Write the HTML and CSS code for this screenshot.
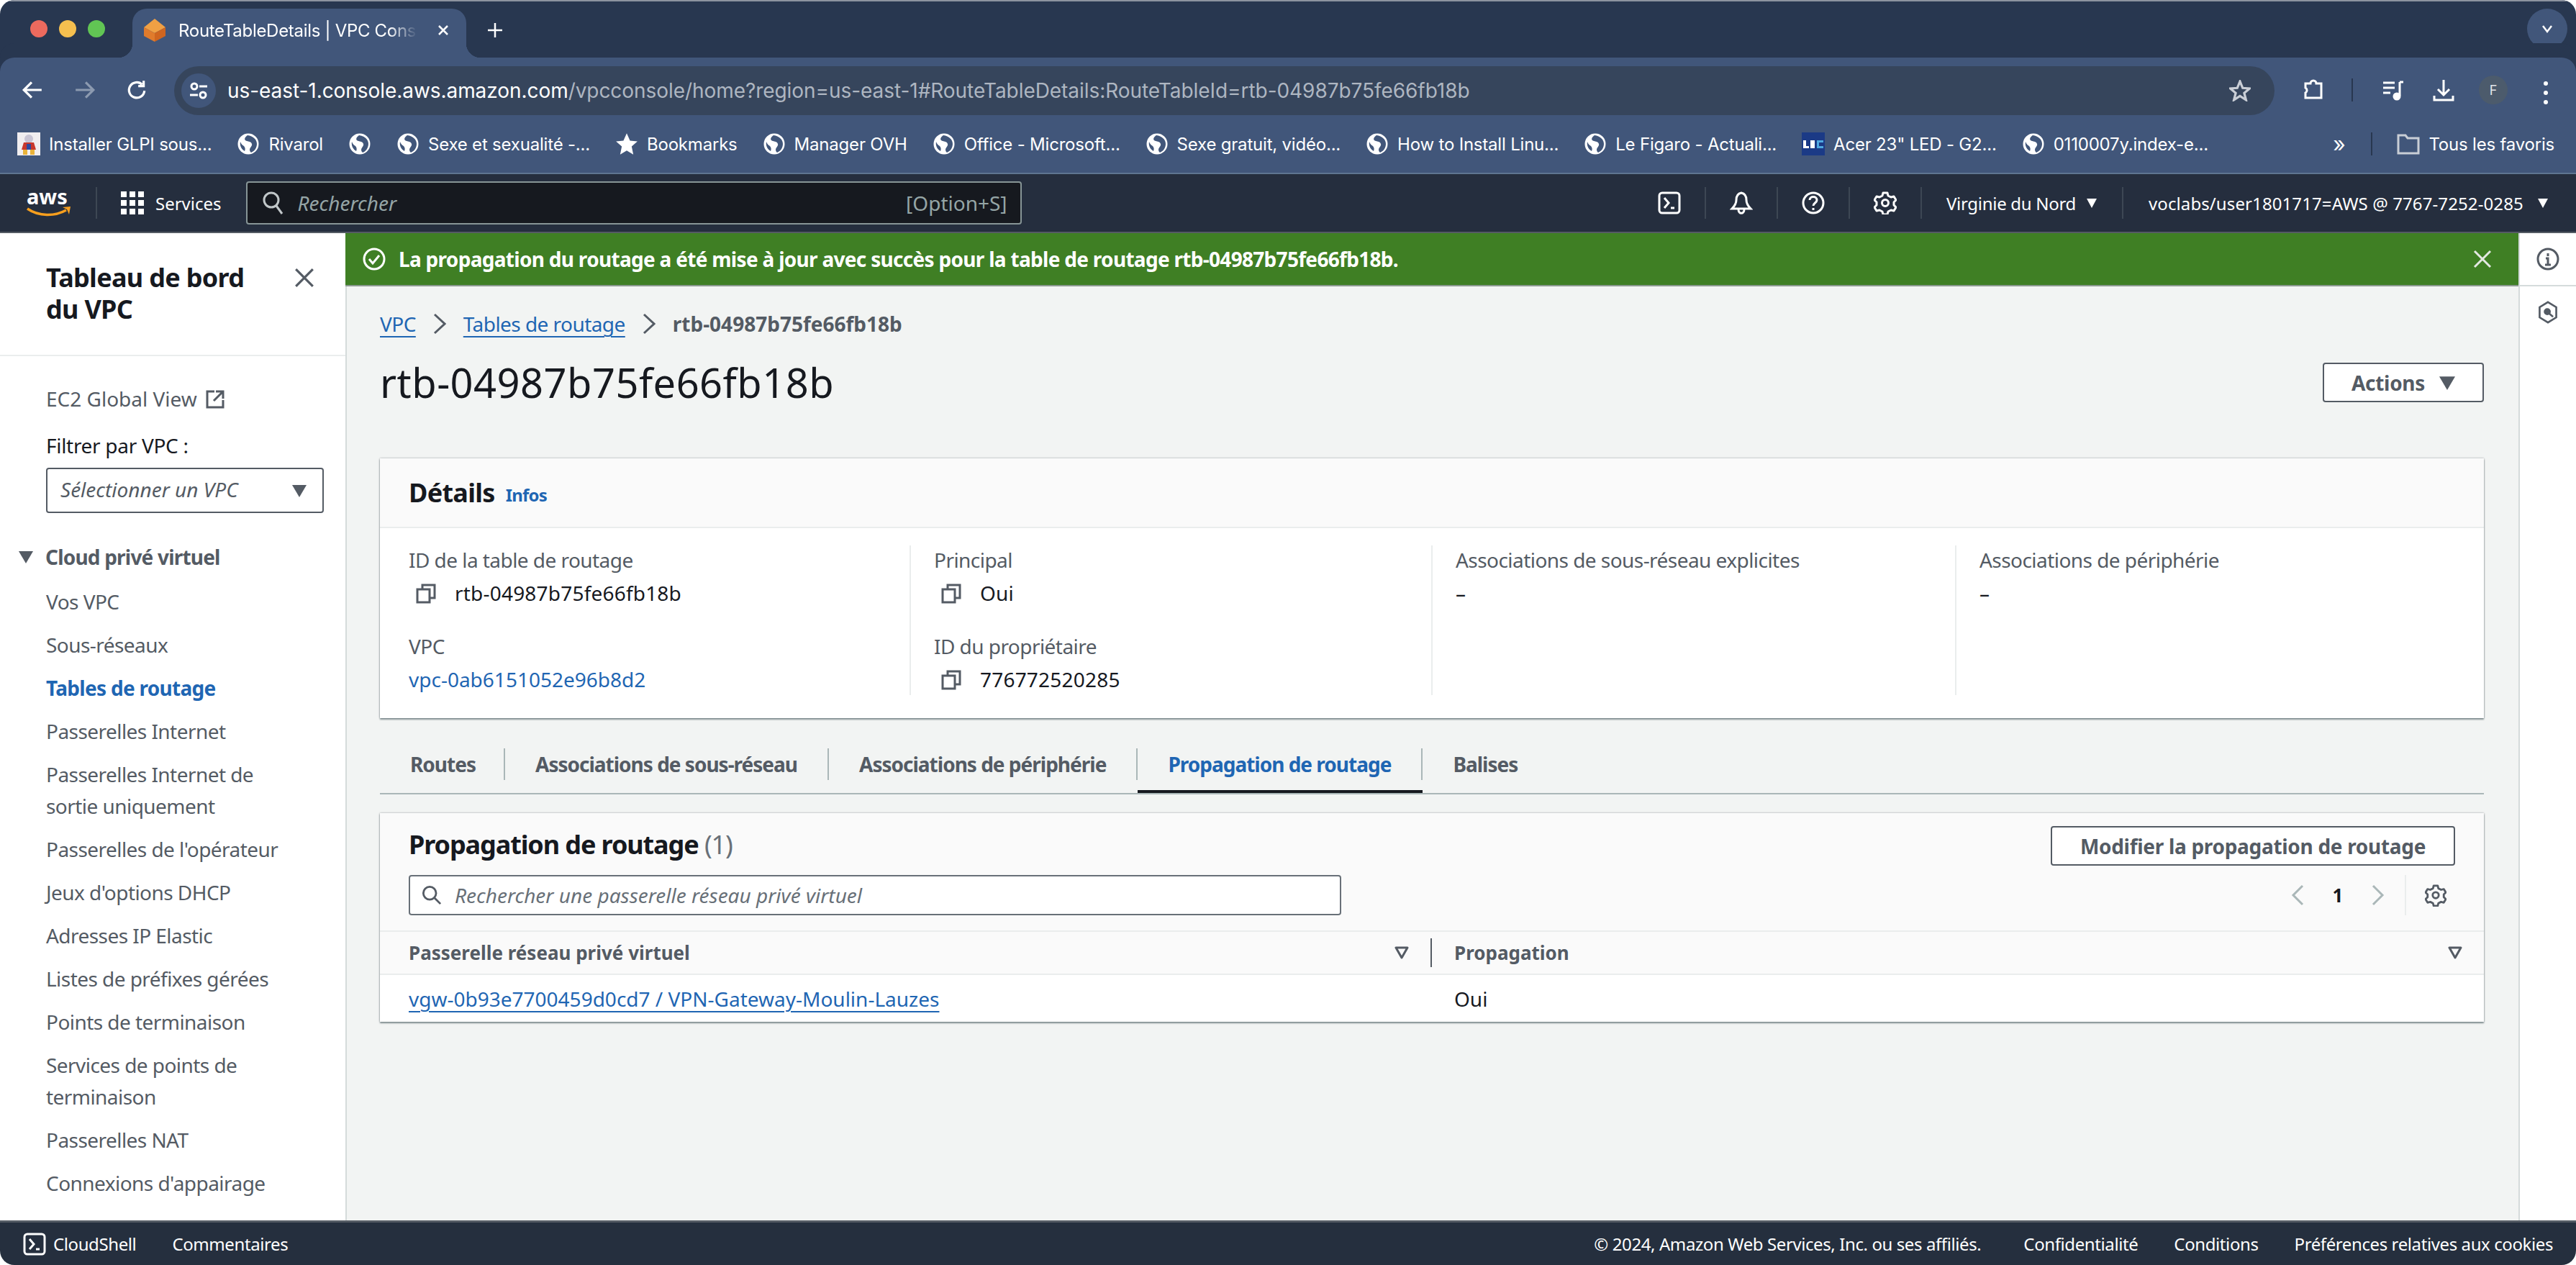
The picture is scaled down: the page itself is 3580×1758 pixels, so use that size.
FILE: index.html
```html
<!DOCTYPE html>
<html lang="fr">

<head>
  <meta charset="UTF-8">
  <title>RouteTableDetails | VPC Console</title>
  <link rel="stylesheet" href="styles.css">
</head>

<body>

  <!-- Shared icons -->
  <svg class="defs" width="0" height="0">
    <symbol id="globe" viewBox="0 0 32 32">
      <circle cx="16" cy="16" r="14.5" fill="#fff"/>
      <path fill="#41567a" d="M15 4c-3 2-5 5-3 7 3 2 8 1 9 5 1 3-3 5-3 8 0 2 1 3 2 4 5-2 8-7 8-12 0-6-5-11-13-12zM5 13c-1 5 1 10 6 13 1-2 1-5-1-7-2-1-4-3-5-6z"/>
    </symbol>
    <symbol id="copy" viewBox="0 0 28 28">
      <path fill="none" stroke="#545b64" stroke-width="3" d="M9 7V2h17v18h-6M2 8h17v18H2z"/>
    </symbol>
    <symbol id="caret" viewBox="0 0 20 20">
      <path fill="#545b64" d="M0 2h20L10 19z"/>
    </symbol>
    <symbol id="caret-w" viewBox="0 0 20 20">
      <path fill="#fff" d="M3 4h14l-7 13z"/>
    </symbol>
    <symbol id="sort" viewBox="0 0 20 20">
      <path fill="none" stroke="#545b64" stroke-width="3" stroke-linejoin="round" d="M2 3h16l-8 14z"/>
    </symbol>
    <symbol id="gear" viewBox="0 0 32 32">
      <path fill="none" stroke="currentColor" stroke-width="3" stroke-linejoin="round" d="M13 2h6l1 4 4 2 4-1 3 5-3 3v4l3 3-3 5-4-1-4 2-1 4h-6l-1-4-4-2-4 1-3-5 3-3v-4l-3-3 3-5 4 1 4-2z"/>
      <circle cx="16" cy="16" r="4.5" fill="none" stroke="currentColor" stroke-width="3"/>
    </symbol>
    <symbol id="shell" viewBox="0 0 32 32">
      <rect x="2" y="2" width="28" height="28" rx="4" fill="none" stroke="#fff" stroke-width="3"/>
      <path fill="none" stroke="#fff" stroke-width="3" d="M9 9l6 7-6 7M18 23h5"/>
    </symbol>
  </svg>

  <div class="window">

    <!-- Browser tabs -->
    <div class="tabstrip">
      <div class="lights">
        <span class="light red"></span>
        <span class="light yellow"></span>
        <span class="light green"></span>
      </div>
      <div class="tab-browser">
        <svg class="favicon" viewBox="0 0 30 32">
          <path fill="#f0a044" d="M15 0l15 12-15 8L0 12z"/>
          <path fill="#e07b2c" d="M0 12l15 8v12L0 24z"/>
          <path fill="#d0651f" d="M30 12l-15 8v12l15-8z"/>
        </svg>
        <span class="tab-title">RouteTableDetails | VPC Cons</span>
        <svg class="tab-close" viewBox="0 0 16 16"><path d="M2 2l12 12M14 2L2 14"/></svg>
      </div>
      <svg class="tab-new" viewBox="0 0 20 20"><path d="M10 0v20M0 10h20"/></svg>
      <div class="tab-menu">
        <svg viewBox="0 0 16 16"><path d="M2 4l6 8 6-8"/></svg>
      </div>
    </div>

    <!-- Browser toolbar -->
    <div class="toolbar">
      <svg class="tool arrow" viewBox="0 0 28 28"><path d="M26 14H4M13 4L3 14l10 10"/></svg>
      <svg class="tool arrow off" viewBox="0 0 28 28"><path d="M2 14h22M15 4l10 10-10 10"/></svg>
      <svg class="tool arrow" viewBox="0 0 28 28"><path d="M24 15a10 10 0 1 1-3-8M23 2v7h-7"/></svg>
      <div class="address">
        <span class="site-btn">
          <svg viewBox="0 0 28 28"><circle cx="8" cy="8" r="4"/><path d="M15 8h11M2 20h11"/><circle cx="20" cy="20" r="4"/></svg>
        </span>
        <span class="url"><b>us-east-1.console.aws.amazon.com</b>/vpcconsole/home?region=us-east-1#RouteTableDetails:RouteTableId=rtb-04987b75fe66fb18b</span>
        <svg class="url-star" viewBox="0 0 28 28"><path d="M14 2l3.5 8.500 9 .7-7 5.800 2.300 9L14 21l-7.800 5 2.300-9-7-5.800 9-.7z"/></svg>
      </div>
      <svg class="tool ext" viewBox="0 0 32 32"><path d="M5 7h7a4 4 0 0 1 8 0h7v20H5v-7a4 4 0 0 0 0-7z"/></svg>
      <span class="tool-sep"></span>
      <svg class="tool media" viewBox="0 0 32 32"><path d="M3 6h16M3 13h16M3 20h10"/><path d="M26 5v19"/><circle cx="22" cy="25" r="4" class="solid"/><path d="M26 5h5"/></svg>
      <svg class="tool down" viewBox="0 0 32 32"><path d="M16 2v21M8 15l8 8 8-8M3 24v6h26v-6"/></svg>
      <span class="avatar">F</span>
      <span class="dots"><i></i><i></i><i></i></span>
    </div>

    <!-- Bookmarks -->
    <div class="bookmarks">
      <span class="bm">
        <svg class="bm-icon" viewBox="0 0 32 32">
          <rect width="32" height="32" fill="#f1eef0"/><circle cx="16" cy="9" r="6" fill="#c9c5d4"/>
          <path fill="#c8372d" d="M9 14h14l3 10H6z"/><path fill="#e8b23a" d="M8 24h6v7H8zM18 24h6v7h-6z"/><path fill="#2c4aa0" d="M13 16h6v8h-6z"/>
        </svg>Installer GLPI sous...</span>
      <span class="bm"><svg class="bm-icon"><use href="#globe"/></svg>Rivarol</span>
      <span class="bm"><svg class="bm-icon"><use href="#globe"/></svg></span>
      <span class="bm"><svg class="bm-icon"><use href="#globe"/></svg>Sexe et sexualité -...</span>
      <span class="bm">
        <svg class="bm-icon" viewBox="0 0 28 28"><path fill="#fff" d="M14 1l4 9 9 1-7 6 2 10-8-5-8 5 2-10-7-6 9-1z"/></svg>Bookmarks</span>
      <span class="bm"><svg class="bm-icon"><use href="#globe"/></svg>Manager OVH</span>
      <span class="bm"><svg class="bm-icon"><use href="#globe"/></svg>Office - Microsoft...</span>
      <span class="bm"><svg class="bm-icon"><use href="#globe"/></svg>Sexe gratuit, vidéo...</span>
      <span class="bm"><svg class="bm-icon"><use href="#globe"/></svg>How to Install Linu...</span>
      <span class="bm"><svg class="bm-icon"><use href="#globe"/></svg>Le Figaro - Actuali...</span>
      <span class="bm">
        <svg class="bm-icon" viewBox="0 0 32 32">
          <rect width="32" height="32" fill="#1b3a86"/><path fill="#fff" d="M2 11h4v8h4v3H2z"/><path fill="#fff" d="M12 11h6v11h-6z"/><path fill="#4fa8e0" d="M21 11h9v3h-6v5h6v3h-9z"/>
        </svg>Acer 23" LED - G2...</span>
      <span class="bm"><svg class="bm-icon"><use href="#globe"/></svg>0110007y.index-e...</span>
      <span class="bm-more">»</span>
      <span class="bm-sep"></span>
      <span class="bm bm-all">
        <svg class="bm-icon" viewBox="0 0 32 32"><path fill="none" stroke="#c9ced6" stroke-width="3" d="M2 4h10l3 4h15v21H2z"/></svg>Tous les favoris</span>
    </div>

    <!-- AWS top navigation -->
    <header class="aws-nav">
      <svg class="aws-logo" viewBox="0 0 64 44">
        <text x="1" y="24" class="aws-word">aws</text>
        <path fill="none" stroke="#f79f1e" stroke-width="3.500" d="M2 30c16 11 38 11 54 2"/>
        <path fill="#f79f1e" d="M51 28l11-1-2 11-3-7z"/>
      </svg>
      <span class="nav-rule"></span>
      <svg class="grid-icon" viewBox="0 0 32 32">
        <path fill="#fff" d="M0 0h8v8H0zM12 0h8v8h-8zM24 0h8v8h-8zM0 12h8v8H0zM12 12h8v8h-8zM24 12h8v8h-8zM0 24h8v8H0zM12 24h8v8h-8zM24 24h8v8h-8z"/>
      </svg>
      <span class="services">Services</span>
      <div class="nav-search">
        <svg viewBox="0 0 30 34"><circle cx="13" cy="13" r="10"/><path d="M20 21l8 11"/></svg>
        <em>Rechercher</em>
        <span>[Option+S]</span>
      </div>
      <div class="nav-right">
        <span class="nav-cell"><svg class="nav-icon"><use href="#shell"/></svg></span>
        <span class="nav-cell"><svg class="nav-icon" viewBox="0 0 32 32"><path d="M16 2c5 1 7 5 7 10 0 5 2 8 6 12H3c4-4 6-7 6-12 0-5 2-9 7-10zM12 25c0 7 8 7 8 0"/></svg></span>
        <span class="nav-cell"><svg class="nav-icon" viewBox="0 0 32 32"><circle cx="16" cy="16" r="14"/><path d="M11 12c0-6 10-6 10 0 0 4-5 4-5 8"/><path d="M16 23v3"/></svg></span>
        <span class="nav-cell nav-gear"><svg class="nav-icon"><use href="#gear"/></svg></span>
        <span class="nav-cell nav-text region">Virginie du Nord <svg class="nav-caret"><use href="#caret-w"/></svg></span>
        <span class="nav-text account">voclabs/user1801717=AWS @ 7767-7252-0285 <svg class="nav-caret"><use href="#caret-w"/></svg></span>
      </div>
    </header>

    <div class="console">

      <!-- Side navigation -->
      <aside class="sidebar">
        <div class="side-head">
          <h2>Tableau de bord du VPC</h2>
          <svg class="side-close" viewBox="0 0 28 28"><path d="M3 3l22 22M25 3L3 25"/></svg>
        </div>
        <div class="side-body">
          <a class="side-ec2">EC2 Global View
            <svg viewBox="0 0 28 28"><path d="M12 4H2v22h22V16"/><path d="M14 4h10v10M24 4L11 17"/></svg>
          </a>
          <label class="side-filter">Filtrer par VPC :</label>
          <div class="side-select">
            <em>Sélectionner un VPC</em>
            <svg><use href="#caret"/></svg>
          </div>
          <div class="side-group">
            <svg><use href="#caret"/></svg>Cloud privé virtuel
          </div>
          <ul class="side-links">
            <li>Vos VPC</li>
            <li>Sous-réseaux</li>
            <li class="current">Tables de routage</li>
            <li>Passerelles Internet</li>
            <li>Passerelles Internet de sortie uniquement</li>
            <li>Passerelles de l'opérateur</li>
            <li>Jeux d'options DHCP</li>
            <li>Adresses IP Elastic</li>
            <li>Listes de préfixes gérées</li>
            <li>Points de terminaison</li>
            <li>Services de points de terminaison</li>
            <li>Passerelles NAT</li>
            <li>Connexions d'appairage</li>
          </ul>
        </div>
      </aside>

      <!-- Main content -->
      <main class="main">
        <div class="flash">
          <svg class="flash-check" viewBox="0 0 32 32"><circle cx="16" cy="16" r="14"/><path d="M9 16l5 6 9-11"/></svg>
          <span class="flash-text">La propagation du routage a été mise à jour avec succès pour la table de routage rtb-04987b75fe66fb18b.</span>
          <svg class="flash-close" viewBox="0 0 28 28"><path d="M3 3l22 22M25 3L3 25"/></svg>
        </div>

        <div class="page">
          <nav class="crumbs">
            <a>VPC</a>
            <svg viewBox="0 0 18 30"><path d="M2 2l14 13L2 28"/></svg>
            <a>Tables de routage</a>
            <svg viewBox="0 0 18 30"><path d="M2 2l14 13L2 28"/></svg>
            <span>rtb-04987b75fe66fb18b</span>
          </nav>

          <div class="page-head">
            <h1>rtb-04987b75fe66fb18b</h1>
            <button class="btn btn-actions">Actions <svg><use href="#caret"/></svg></button>
          </div>

          <section class="card">
            <div class="card-head">
              <h2>Détails</h2>
              <a class="info">Infos</a>
            </div>
            <div class="details">
              <div class="col">
                <div class="kv">
                  <label>ID de la table de routage</label>
                  <p class="copy"><svg><use href="#copy"/></svg>rtb-04987b75fe66fb18b</p>
                </div>
                <div class="kv">
                  <label>VPC</label>
                  <p><a>vpc-0ab6151052e96b8d2</a></p>
                </div>
              </div>
              <div class="col">
                <div class="kv">
                  <label>Principal</label>
                  <p class="copy"><svg><use href="#copy"/></svg>Oui</p>
                </div>
                <div class="kv">
                  <label>ID du propriétaire</label>
                  <p class="copy"><svg><use href="#copy"/></svg>776772520285</p>
                </div>
              </div>
              <div class="col">
                <div class="kv">
                  <label>Associations de sous-réseau explicites</label>
                  <p>–</p>
                </div>
              </div>
              <div class="col">
                <div class="kv">
                  <label>Associations de périphérie</label>
                  <p>–</p>
                </div>
              </div>
            </div>
          </section>

          <div class="tabs">
            <a class="tab first"><span>Routes</span></a>
            <a class="tab"><span>Associations de sous-réseau</span></a>
            <a class="tab"><span>Associations de périphérie</span></a>
            <a class="tab active"><span>Propagation de routage</span></a>
            <a class="tab last"><span>Balises</span></a>
          </div>

          <section class="card card-table">
            <div class="table-head">
              <div class="table-left">
                <h2>Propagation de routage <small>(1)</small></h2>
                <div class="table-search">
                  <svg viewBox="0 0 30 30"><circle cx="12" cy="12" r="9.500"/><path d="M19 19l9 9"/></svg>
                  <em>Rechercher une passerelle réseau privé virtuel</em>
                </div>
              </div>
              <div class="table-right">
                <button class="btn btn-modify">Modifier la propagation de routage</button>
                <div class="pager">
                  <svg viewBox="0 0 18 30"><path d="M16 2L3 15l13 13"/></svg>
                  <b>1</b>
                  <svg viewBox="0 0 18 30"><path d="M2 2l13 13L2 28"/></svg>
                  <span class="pager-gear"><svg><use href="#gear"/></svg></span>
                </div>
              </div>
            </div>
            <div class="table-row row-head">
              <div class="cell cell-gw">Passerelle réseau privé virtuel <svg><use href="#sort"/></svg></div>
              <div class="cell cell-prop">Propagation <svg><use href="#sort"/></svg></div>
            </div>
            <div class="table-row row-body">
              <div class="cell cell-gw"><a>vgw-0b93e7700459d0cd7 / VPN-Gateway-Moulin-Lauzes</a></div>
              <div class="cell cell-prop">Oui</div>
            </div>
          </section>
        </div>
      </main>

      <!-- Right rail -->
      <aside class="rail">
        <div class="rail-top">
          <svg viewBox="0 0 32 32"><circle cx="16" cy="16" r="14"/><path d="M16 8v4M13 15h3v9M12 24h8"/></svg>
        </div>
        <div class="rail-bottom">
          <svg viewBox="0 0 32 36"><path d="M16 2l13 8v16l-13 8-13-8V10z"/><circle cx="15" cy="17" r="4" class="solid"/><path d="M18 20l6 5"/></svg>
        </div>
      </aside>
    </div>

    <!-- Footer -->
    <footer class="foot">
      <svg class="foot-icon"><use href="#shell"/></svg>
      <span class="foot-shell">CloudShell</span>
      <span>Commentaires</span>
      <span class="foot-copy">© 2024, Amazon Web Services, Inc. ou ses affiliés.</span>
      <span>Confidentialité</span>
      <span>Conditions</span>
      <span>Préférences relatives aux cookies</span>
    </footer>
  </div>

</body>

</html>
```

FILE: styles.css
```css
/* Basic Reset */
* {
  margin: 0;
  padding: 0;
  box-sizing: border-box;
}

html,
body {
  height: 100%;
  background: #fff;
  overflow: hidden;
}

body {
  font-family: "Noto Sans", Arial, sans-serif;
  font-size: 28px;
  color: #16191f;
}

.defs {
  position: absolute;
}

a {
  color: #1f66b3;
}

.window {
  height: 1758px;
  display: flex;
  flex-direction: column;
  border-radius: 20px;
  overflow: hidden;
}

/* Browser tabs */
.tabstrip {
  height: 80px;
  flex: none;
  display: flex;
  align-items: flex-end;
  background: #283750;
  border-top: 2px solid #8c93a0;
  padding-left: 42px;
}

.lights {
  display: flex;
  gap: 16px;
  align-self: flex-start;
  margin-top: 26px;
}

.light {
  width: 24px;
  height: 24px;
  border-radius: 50%;
}

.light.red { background: #ed6a5e; }
.light.yellow { background: #f5bf4f; }
.light.green { background: #61c554; }

.tab-browser {
  width: 464px;
  height: 68px;
  margin-left: 38px;
  display: flex;
  align-items: center;
  background: #41567a;
  border-radius: 20px 20px 0 0;
  padding: 0 0 8px 16px;
  position: relative;
  font-family: Inter, sans-serif;
  font-size: 24px;
  color: #fff;
}

.tab-browser::before,
.tab-browser::after {
  content: "";
  position: absolute;
  bottom: 0;
  width: 20px;
  height: 20px;
}

.tab-browser::before {
  left: -20px;
  background: radial-gradient(circle at 0 0, transparent 20px, #41567a 20.5px);
}

.tab-browser::after {
  right: -20px;
  background: radial-gradient(circle at 100% 0, transparent 20px, #41567a 20.5px);
}

.favicon {
  width: 30px;
  height: 32px;
  flex: none;
}

.tab-title {
  width: 332px;
  margin-left: 18px;
  letter-spacing: -0.3px;
  white-space: nowrap;
  overflow: hidden;
  -webkit-mask-image: linear-gradient(90deg, #000 88%, transparent);
  mask-image: linear-gradient(90deg, #000 88%, transparent);
}

.tab-close {
  width: 16px;
  height: 16px;
  margin-left: 28px;
  fill: none;
  stroke: #fff;
  stroke-width: 2.500;
}

.tab-new {
  width: 20px;
  height: 20px;
  margin: 0 0 28px 30px;
  fill: none;
  stroke: #fff;
  stroke-width: 2.500;
}

.tab-menu {
  width: 56px;
  height: 56px;
  margin: 0 12px 12px auto;
  border-radius: 28px;
  background: #41567a;
  display: flex;
  align-items: center;
  justify-content: center;
}

.tab-menu svg {
  width: 16px;
  height: 16px;
  fill: none;
  stroke: #fff;
  stroke-width: 2.500;
}

/* Browser toolbar */
.toolbar {
  height: 80px;
  flex: none;
  display: flex;
  align-items: flex-start;
  background: #41567a;
  border-radius: 20px 20px 0 0;
  padding: 12px 0 0 30px;
  box-shadow: 0 -20px 0 #283750;
}

.tool {
  width: 30px;
  height: 30px;
  margin-top: 18px;
  flex: none;
  fill: none;
  stroke: #fff;
  stroke-width: 3;
}

.arrow { margin-right: 43px; }
.arrow.off { stroke: #8c9ab0; }
.arrow:nth-child(3) { margin-right: 0; margin-left: -1px; }

.address {
  width: 2919px;
  height: 68px;
  margin-left: 37px;
  border-radius: 34px;
  background: #36455c;
  display: flex;
  align-items: center;
  padding-left: 10px;
  flex: none;
}

.site-btn {
  width: 48px;
  height: 48px;
  flex: none;
  border-radius: 50%;
  background: #41567a;
  display: flex;
  align-items: center;
  justify-content: center;
}

.site-btn svg {
  width: 28px;
  height: 28px;
  fill: none;
  stroke: #fff;
  stroke-width: 3;
}

.url {
  margin-left: 16px;
  font-family: Inter, sans-serif;
  font-size: 28px;
  letter-spacing: -0.06px;
  color: #aeb6c1;
  white-space: nowrap;
}

.url b {
  font-weight: 400;
  color: #fff;
}

.url-star {
  width: 30px;
  height: 30px;
  margin-left: auto;
  margin-right: 33px;
  fill: none;
  stroke: #c9ced6;
  stroke-width: 3;
}

.ext {
  margin-left: 38px;
}

.ext,
.media,
.down {
  width: 32px;
  height: 32px;
  margin-top: 17px;
}

.tool-sep {
  width: 2px;
  height: 32px;
  margin: 17px 0 0 37px;
  background: #283750;
  flex: none;
}

.media { margin-left: 39px; }
.media .solid { fill: #fff; }
.down { margin-left: 39px; }

.avatar {
  width: 40px;
  height: 40px;
  margin: 13px 0 0 33px;
  border-radius: 50%;
  background: #4c5b6c;
  display: flex;
  align-items: center;
  justify-content: center;
  font-family: Inter, sans-serif;
  font-size: 18px;
  color: #e3e6ea;
}

.dots {
  display: flex;
  flex-direction: column;
  gap: 7px;
  margin: 21px 0 0 50px;
}

.dots i {
  width: 6px;
  height: 6px;
  border-radius: 50%;
  background: #fff;
}

/* Bookmarks */
.bookmarks {
  height: 82px;
  flex: none;
  display: flex;
  align-items: center;
  background: #41567a;
  border-bottom: 2px solid #5f7590;
  padding: 0 30px 0 24px;
  font-family: Inter, sans-serif;
  font-size: 24px;
  letter-spacing: -0.2px;
  color: #fff;
  white-space: nowrap;
}

.bm {
  display: flex;
  align-items: center;
  gap: 12px;
  margin-right: 35px;
}

.bm-icon {
  width: 32px;
  height: 32px;
  flex: none;
}

.bm-more {
  margin-left: auto;
  font-size: 30px;
  margin-right: 36px;
}

.bm-sep {
  width: 2px;
  height: 32px;
  background: #283750;
  margin-right: 34px;
}

.bm-all {
  margin-right: 0;
}

/* AWS top navigation */
.aws-nav {
  height: 82px;
  flex: none;
  display: flex;
  align-items: center;
  background: #252e3e;
  border-bottom: 2px solid #545b64;
  padding-left: 36px;
  color: #fff;
  font-size: 24px;
}

.aws-logo {
  width: 64px;
  height: 44px;
  flex: none;
  overflow: visible;
}

.aws-word {
  font-size: 29px;
  font-weight: 700;
  fill: #fff;
}

.nav-rule {
  width: 2px;
  height: 44px;
  background: #3d4754;
  margin: 0 33px;
}

.grid-icon {
  width: 32px;
  height: 32px;
  flex: none;
}

.services {
  margin-left: 16px;
}

.nav-search {
  width: 1078px;
  height: 60px;
  margin-left: 34px;
  display: flex;
  align-items: center;
  background: #16191f;
  border: 2px solid #879596;
  border-radius: 4px;
  padding: 0 18px 0 20px;
  color: #95a5a6;
  font-size: 28px;
}

.nav-search svg {
  width: 30px;
  height: 34px;
  fill: none;
  stroke: #c1c7c9;
  stroke-width: 3;
}

.nav-search em {
  margin-left: 20px;
}

.nav-search span {
  margin-left: auto;
}

.nav-right {
  margin-left: auto;
  display: flex;
  align-items: center;
}

.nav-cell {
  width: 100px;
  height: 44px;
  display: flex;
  align-items: center;
  justify-content: center;
  border-right: 2px solid #3d4754;
}

.nav-icon {
  width: 32px;
  height: 32px;
  fill: none;
  stroke: #fff;
  stroke-width: 3;
}

.nav-gear .nav-icon {
  stroke: none;
  color: #fff;
}

.nav-text {
  white-space: nowrap;
}

.nav-cell.region {
  width: 280px;
  justify-content: flex-start;
  padding-left: 34px;
  letter-spacing: -0.3px;
}

.account {
  width: 629px;
  padding-left: 35px;
  display: flex;
  align-items: center;
  gap: 17px;
  letter-spacing: 0.1px;
}

.nav-caret {
  width: 20px;
  height: 20px;
  flex: none;
}

.region .nav-caret {
  margin-left: 12px;
}

/* Console body */
.console {
  flex: 1;
  min-height: 0;
  display: flex;
}

/* Side navigation */
.sidebar {
  width: 480px;
  flex: none;
  background: #fff;
  overflow: hidden;
  color: #545b64;
}

.side-head {
  height: 171px;
  padding: 40px 42px 0 64px;
  display: flex;
  justify-content: space-between;
  border-bottom: 2px solid #eaeded;
}

.side-head h2 {
  width: 300px;
  font-size: 36px;
  line-height: 44px;
  font-weight: 700;
  letter-spacing: -0.7px;
  color: #16191f;
}

.side-close {
  width: 30px;
  height: 30px;
  margin-top: 7px;
  fill: none;
  stroke: #545b64;
  stroke-width: 3;
}

.side-body {
  padding-top: 37px;
  line-height: 44px;
}

.side-ec2 {
  display: flex;
  align-items: center;
  gap: 12px;
  padding-left: 64px;
  color: #545b64;
}

.side-ec2 svg {
  width: 28px;
  height: 28px;
  fill: none;
  stroke: #545b64;
  stroke-width: 3;
}

.side-filter {
  display: block;
  margin: 21px 0 0 64px;
  letter-spacing: -0.3px;
  color: #16191f;
}

.side-select {
  width: 386px;
  height: 63px;
  margin: 9px 0 0 64px;
  display: flex;
  align-items: center;
  justify-content: space-between;
  border: 2px solid #545b64;
  border-radius: 4px;
  padding: 0 22px 4px 18px;
}

.side-select svg {
  width: 20px;
  height: 20px;
  margin-top: 4px;
}

.side-group {
  display: flex;
  align-items: center;
  gap: 17px;
  margin-top: 39px;
  padding-left: 26px;
  font-weight: 700;
  letter-spacing: -0.8px;
}

.side-group svg {
  width: 20px;
  height: 20px;
}

.side-links {
  list-style: none;
  margin-top: 18px;
  display: flex;
  flex-direction: column;
  gap: 16px;
  padding: 0 76px 0 64px;
  letter-spacing: -0.55px;
}

.side-links .current {
  color: #1f66b3;
  font-weight: 700;
  letter-spacing: -0.7px;
}

/* Main content */
.main {
  flex: 1;
  min-width: 0;
  background: #f2f4f3;
  border-left: 2px solid #d5dbdb;
}

.flash {
  height: 74px;
  margin-left: -2px;
  display: flex;
  align-items: center;
  background: #3f7f24;
  border-bottom: 2px solid #8b9a8f;
  padding: 0 36px 0 24px;
  color: #fff;
}

.flash-check {
  width: 32px;
  height: 32px;
  flex: none;
  fill: none;
  stroke: #fff;
  stroke-width: 3;
}

.flash-text {
  margin-left: 18px;
  font-weight: 700;
  letter-spacing: -0.7px;
}

.flash-close {
  width: 28px;
  height: 28px;
  margin-left: auto;
  fill: none;
  stroke: #e4e8e2;
  stroke-width: 3;
}

.page {
  padding: 30px 48px 0 46px;
}

/* Breadcrumbs */
.crumbs {
  height: 44px;
  display: flex;
  align-items: center;
  gap: 24px;
}

.crumbs a {
  text-decoration: underline;
  text-underline-offset: 6px;
  text-decoration-thickness: 2px;
  letter-spacing: -0.55px;
}

.crumbs svg {
  width: 18px;
  height: 30px;
  fill: none;
  stroke: #545b64;
  stroke-width: 3;
}

.crumbs span {
  font-weight: 700;
  color: #545b64;
}

.page-head {
  display: flex;
  justify-content: space-between;
  align-items: flex-start;
  margin-top: 23px;
}

.page-head h1 {
  font-size: 56px;
  line-height: 72px;
  font-weight: 400;
  letter-spacing: 0.45px;
}

.btn {
  font-family: inherit;
  font-size: 28px;
  font-weight: 700;
  letter-spacing: -0.3px;
  color: #545b64;
  background: #fff;
  border: 2px solid #545b64;
  border-radius: 4px;
  height: 55px;
}

.btn-actions {
  width: 224px;
  margin-top: 9px;
  display: flex;
  align-items: center;
  justify-content: center;
  gap: 20px;
}

.btn-actions svg {
  width: 22px;
  height: 22px;
}

/* Cards */
.card {
  margin-top: 70px;
  background: #fff;
  box-shadow: 0 2px 2px rgba(0, 28, 36, 0.45), 0 -1px 2px rgba(0, 28, 36, 0.08), 1px 0 2px rgba(0, 28, 36, 0.12), -1px 0 2px rgba(0, 28, 36, 0.12);
}

.card-head {
  height: 97px;
  display: flex;
  align-items: center;
  gap: 15px;
  padding: 0 40px;
  background: #fafafa;
  border-bottom: 2px solid #eaeded;
}

.card-head h2 {
  font-size: 36px;
  font-weight: 700;
  letter-spacing: -0.7px;
}

.info {
  margin-top: 6px;
  font-size: 24px;
  font-weight: 700;
  letter-spacing: -0.8px;
}

.details {
  margin: 0 40px;
  padding: 24px 0 32px;
  display: grid;
  grid-template-columns: 696px 725px 728px 1fr;
}

.col {
  height: 208px;
  display: flex;
  flex-direction: column;
  gap: 32px;
}

.col + .col {
  border-left: 2px solid #eaeded;
  padding-left: 32px;
}

.kv label {
  display: block;
  line-height: 44px;
  margin-top: -2px;
  letter-spacing: -0.55px;
  color: #545b64;
}

.kv p {
  line-height: 43px;
  margin-top: 3px;
}

.copy {
  display: flex;
  align-items: center;
  gap: 26px;
  padding-left: 10px;
  letter-spacing: 0.2px;
}

.copy svg {
  width: 28px;
  height: 28px;
}

/* Tabs */
.tabs {
  height: 70px;
  margin-top: 36px;
  display: flex;
  border-bottom: 2px solid #aab7b8;
}

.tab {
  height: 68px;
  padding-top: 6px;
  border-bottom: 4px solid transparent;
  color: #545b64;
  font-weight: 700;
  letter-spacing: -1px;
}

.tab span {
  display: block;
  line-height: 44px;
  padding: 0 42px;
  border-right: 2px solid #aab7b8;
}

.tab.first span {
  padding-right: 39px;
}

.tab.last span {
  border-right: none;
}

.tab.active {
  color: #1f66b3;
  border-bottom-color: #16191f;
}

/* Table card */
.card-table {
  margin-top: 26px;
}

.table-head {
  height: 165px;
  display: flex;
  justify-content: space-between;
  padding: 0 40px;
  background: #fafafa;
  border-bottom: 2px solid #eaeded;
}

.table-left h2 {
  margin-top: 22px;
  font-size: 36px;
  line-height: 44px;
  font-weight: 700;
  letter-spacing: -1.1px;
}

.table-left small {
  font-size: 36px;
  font-weight: 400;
  color: #687078;
}

.table-search {
  width: 1296px;
  height: 56px;
  margin-top: 20px;
  display: flex;
  align-items: center;
  background: #fff;
  border: 2px solid #687078;
  border-radius: 4px;
  padding-left: 16px;
  color: #687078;
}

.table-search svg {
  width: 28px;
  height: 28px;
  flex: none;
  fill: none;
  stroke: #545b64;
  stroke-width: 3;
}

.table-search em {
  margin-left: 18px;
}

.table-right {
  display: flex;
  flex-direction: column;
  align-items: flex-end;
}

.btn-modify {
  width: 562px;
  margin-top: 18px;
}

.pager {
  height: 56px;
  margin-top: 13px;
  display: flex;
  align-items: center;
  margin-right: -13px;
}

.pager > svg {
  width: 18px;
  height: 30px;
  fill: none;
  stroke: #aab7b8;
  stroke-width: 3;
}

.pager b {
  width: 94px;
  text-align: center;
  font-size: 26px;
}

.pager-gear {
  height: 56px;
  margin-left: 28px;
  padding: 0 25px 0 26px;
  display: flex;
  align-items: center;
  border-left: 2px solid #eaeded;
}

.pager-gear svg {
  width: 30px;
  height: 32px;
  color: #545b64;
}

.table-row {
  display: flex;
}

.row-head {
  height: 60px;
  background: #fafafa;
  border-bottom: 2px solid #eaeded;
  align-items: center;
  color: #545b64;
  font-weight: 700;
  font-size: 26px;
}

.row-body {
  height: 65px;
  align-items: center;
}

.cell {
  display: flex;
  align-items: center;
  justify-content: space-between;
}

.cell-gw {
  width: 1462px;
  padding: 0 30px 0 40px;
}

.cell-prop {
  flex: 1;
  padding: 0 30px 0 31px;
}

.row-head .cell {
  height: 40px;
}

.row-head .cell-gw {
  border-right: 2px solid #545b64;
}

.row-head svg {
  width: 20px;
  height: 20px;
}

.row-body a {
  text-decoration: underline;
  text-underline-offset: 6px;
  text-decoration-thickness: 2px;
}

/* Right rail */
.rail {
  width: 80px;
  flex: none;
  background: #fff;
  border-left: 2px solid #d5dbdb;
}

.rail-top,
.rail-bottom {
  display: flex;
  justify-content: center;
}

.rail-top {
  height: 74px;
  align-items: center;
  border-bottom: 2px solid #d5dbdb;
}

.rail-bottom {
  padding-top: 20px;
}

.rail svg {
  width: 32px;
  height: 32px;
  fill: none;
  stroke: #545b64;
  stroke-width: 3;
}

.rail .solid {
  fill: #545b64;
}

/* Footer */
.foot {
  height: 62px;
  flex: none;
  display: flex;
  align-items: center;
  gap: 50px;
  background: #252f3e;
  border-top: 3px solid #545b64;
  padding: 0 32px;
  color: #fff;
  font-size: 24px;
  letter-spacing: -0.4px;
}

.foot-icon {
  width: 32px;
  height: 32px;
  margin-right: -40px;
}

.foot-copy {
  margin-left: auto;
  margin-right: 9px;
}
```
